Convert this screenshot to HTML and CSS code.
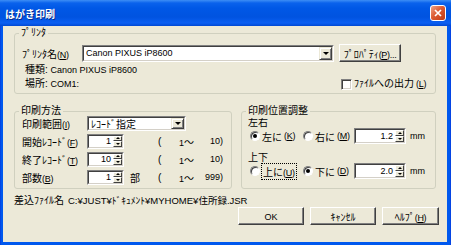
FILE: index.html
```html
<!DOCTYPE html>
<html lang="ja">
<head>
<meta charset="utf-8">
<title>はがき印刷</title>
<link rel="stylesheet" href="styles.css">
</head>
<body>
<div class="win">
  <div class="titlebar">
    <span class="title">はがき印刷</span>
    <span class="close"><svg width="8" height="8" viewBox="0 0 8 8"><path d="M1 1L7 7M7 1L1 7" stroke="#fff" stroke-width="1.7" fill="none"/></svg></span>
  </div>
  <div class="client">
    <div class="grp grp-printer">
      <span class="legend">ﾌﾟﾘﾝﾀ</span>
      <div class="row-name">
        <span class="lbl-name">ﾌﾟﾘﾝﾀ名<span class="k">(<u>N</u>)</span></span>
        <div class="field combo-printer">
          <div class="field-in"><span class="combo-text l">Canon PIXUS iP8600</span><span class="drop"><i></i></span></div>
        </div>
        <button class="btn btn-prop">ﾌﾟﾛﾊﾟﾃｨ<span class="k">(<u>P</u>)...</span></button>
      </div>
      <div class="info info-first">種類: <span class="l">Canon PIXUS iP8600</span></div>
      <div class="info">場所: <span class="l">COM1:</span><span class="chk"><span class="box"></span>ﾌｧｲﾙへの出力<span class="k">(<u>L</u>)</span></span></div>
    </div>

    <div class="groups">
      <div class="grp grp-method">
        <span class="legend">印刷方法</span>
        <div class="frow">
          <span class="flbl">印刷範囲<span class="k">(<u>I</u>)</span></span>
          <div class="field combo-range">
            <div class="field-in"><span class="combo-text">ﾚｺｰﾄﾞ指定</span><span class="drop"><i></i></span></div>
          </div>
        </div>
        <div class="frow">
          <span class="flbl">開始ﾚｺｰﾄﾞ<span class="k">(<u>F</u>)</span></span>
          <div class="field spin spin-rec"><div class="field-in"><span class="spin-val l">1</span><span class="sbtns"><span class="sb"><i class="up"></i></span><span class="sb"><i class="dn"></i></span></span></div></div>
          <span class="unit"></span><span class="paren">(</span><span class="lo"><span class="l">1</span>～</span><span class="hi l">10)</span>
        </div>
        <div class="frow">
          <span class="flbl">終了ﾚｺｰﾄﾞ<span class="k">(<u>T</u>)</span></span>
          <div class="field spin spin-rec"><div class="field-in"><span class="spin-val l">10</span><span class="sbtns"><span class="sb"><i class="up"></i></span><span class="sb"><i class="dn"></i></span></span></div></div>
          <span class="unit"></span><span class="paren">(</span><span class="lo"><span class="l">1</span>～</span><span class="hi l">10)</span>
        </div>
        <div class="frow">
          <span class="flbl">部数<span class="k">(<u>B</u>)</span></span>
          <div class="field spin spin-rec"><div class="field-in"><span class="spin-val l">1</span><span class="sbtns"><span class="sb"><i class="up"></i></span><span class="sb"><i class="dn"></i></span></span></div></div>
          <span class="unit">部</span><span class="paren">(</span><span class="lo"><span class="l">1</span>～</span><span class="hi l">999)</span>
        </div>
      </div>

      <div class="grp grp-pos">
        <span class="legend">印刷位置調整</span>
        <div class="hd">左右</div>
        <div class="rrow">
          <span class="opt opt1"><span class="radio on"></span>左に<span class="k">(<u>K</u>)</span></span>
          <span class="opt opt2"><span class="radio"></span>右に<span class="k">(<u>M</u>)</span></span>
          <div class="field spin spin-pos"><div class="field-in"><span class="spin-val l">1.2</span><span class="sbtns"><span class="sb"><i class="up"></i></span><span class="sb"><i class="dn"></i></span></span></div></div>
          <span class="mm l">mm</span>
        </div>
        <div class="hd hd2">上下</div>
        <div class="rrow">
          <span class="opt opt1"><span class="radio"></span><span class="focus">上に<span class="k">(<u>U</u>)</span></span></span>
          <span class="opt opt2"><span class="radio on"></span>下に<span class="k">(<u>D</u>)</span></span>
          <div class="field spin spin-pos"><div class="field-in"><span class="spin-val l">2.0</span><span class="sbtns"><span class="sb"><i class="up"></i></span><span class="sb"><i class="dn"></i></span></span></div></div>
          <span class="mm l">mm</span>
        </div>
      </div>
    </div>

    <div class="file"><span class="file-lbl">差込ﾌｧｲﾙ名</span><span class="path">C:¥JUST¥ﾄﾞｷｭﾒﾝﾄ¥MYHOME¥住所録.JSR</span></div>

    <div class="btns">
      <button class="btn btn-ok"><span class="l">OK</span></button>
      <button class="btn btn-cancel">ｷｬﾝｾﾙ</button>
      <button class="btn btn-help">ﾍﾙﾌﾟ<span class="k">(<u>H</u>)</span></button>
    </div>
  </div>
</div>
</body>
</html>
```

FILE: styles.css
```css
* { box-sizing: border-box; }
html, body { margin: 0; padding: 0; }
body {
  width: 451px;
  height: 245px;
  overflow: hidden;
  font-family: "Liberation Sans", "Noto Sans CJK JP", sans-serif;
  font-size: 10px;
  color: #000;
  background: #0055e5;
}
.l { font-size: 9px; }
.k { font-size: 9px; letter-spacing: -0.3px; }
u { text-decoration: underline; text-underline-offset: 1px; }

.win {
  width: 451px;
  height: 245px;
  display: flex;
  flex-direction: column;
  background: linear-gradient(to right, #0831d9 0, #0058ee 1px, #0058ee 450px, #0831d9 451px);
}
.titlebar {
  height: 26px;
  flex: none;
  display: flex;
  align-items: center;
  padding: 0 5px 0 5px;
  background: linear-gradient(to bottom, #3d8ef5 0, #0a62ec 3px, #0058e6 8px, #0053e0 17px, #0a5ff2 23px, #0048d2 26px);
}
.title {
  color: #fff;
  font-weight: bold;
  font-size: 10px;
  font-family: "Noto Sans CJK JP", sans-serif;
  text-shadow: 1px 1px 0 #0a2a8c;
}
.close {
  margin-left: auto;
  width: 16px;
  height: 16px;
  border: 1px solid #fff;
  border-radius: 3px;
  background: linear-gradient(135deg, #eea48a 0, #dd5b32 45%, #c03a14 100%);
  display: flex;
  align-items: center;
  justify-content: center;
}
.client {
  flex: 1;
  margin: 0 4px 3px 3px;
  background: #ece9d8;
  display: flex;
  flex-direction: column;
}

.grp {
  position: relative;
  border: 1px solid #d0d0bf;
  border-radius: 3px;
}
.legend {
  position: absolute;
  top: -8px;
  left: 4px;
  padding: 0 2px;
  background: #ece9d8;
  line-height: 14px;
  white-space: nowrap;
}

/* printer group */
.grp-printer {
  margin: 7px 0 0 11px;
  width: 422px;
  height: 61px;
  padding: 10px 0 0 7px;
}
.row-name {
  display: flex;
  align-items: center;
  height: 18px;
}
.lbl-name { width: 60px; flex: none; white-space: nowrap; }

.field {
  display: flex;
  border: 1px solid;
  border-color: #808080 #fff #fff #808080;
  flex: none;
}
.field-in {
  flex: 1;
  display: flex;
  align-items: stretch;
  background: #fff;
  border: 1px solid;
  border-color: #404040 #d4d0c8 #d4d0c8 #404040;
  min-width: 0;
}
.combo-text {
  flex: 1;
  padding-left: 2px;
  display: flex;
  align-items: center;
  white-space: nowrap;
  overflow: hidden;
}
.drop {
  width: 13px;
  flex: none;
  background: #ece9d8;
  border: 1px solid;
  border-color: #ece9d8 #404040 #404040 #ece9d8;
  box-shadow: inset 1px 1px 0 #fff, inset -1px -1px 0 #808080;
  display: flex;
  align-items: center;
  justify-content: center;
}
.drop i {
  width: 0;
  height: 0;
  border-left: 3px solid transparent;
  border-right: 3px solid transparent;
  border-top: 3px solid #000;
}
.combo-printer { width: 252px; height: 17px; }

.btn {
  font: inherit;
  color: #000;
  background: #ece9d8;
  border: 1px solid;
  border-color: #fff #404040 #404040 #fff;
  box-shadow: inset -1px -1px 0 #808080;
  padding: 0;
  height: 18px;
  white-space: nowrap;
  flex: none;
}
.btn-prop { width: 62px; margin-left: 5px; }

.info {
  height: 14px;
  line-height: 14px;
  padding-left: 3px;
  display: flex;
  align-items: center;
  white-space: pre;
}
.info-first { margin-top: 1px; }
.chk {
  margin-left: auto;
  width: 94px;
  display: flex;
  align-items: center;
  gap: 2px;
}
.box {
  width: 11px;
  height: 11px;
  flex: none;
  background: #fff;
  border: 1px solid;
  border-color: #808080 #fff #fff #808080;
  box-shadow: inset 1px 1px 0 #404040, inset -1px -1px 0 #d4d0c8;
}

/* lower groups */
.groups {
  display: flex;
  align-items: flex-start;
  margin-top: 17px;
}
.grp-method {
  margin-left: 11px;
  width: 218px;
  height: 78px;
  padding: 2px 0 0 7px;
}
.grp-pos {
  margin-left: 9px;
  width: 195px;
  height: 78px;
  padding: 4px 0 0 6px;
}
.frow {
  display: flex;
  align-items: center;
  height: 18px;
  white-space: nowrap;
}
.flbl { width: 65px; flex: none; }
.combo-range { width: 99px; height: 15px; }

.spin { height: 15px; }
.spin-rec { width: 37px; }
.spin-val {
  flex: 1;
  text-align: right;
  padding-right: 2px;
  display: flex;
  align-items: center;
  justify-content: flex-end;
}
.sbtns {
  width: 9px;
  flex: none;
  display: flex;
  flex-direction: column;
}
.sb {
  flex: 1;
  background: #ece9d8;
  border: 1px solid;
  border-color: #fff #404040 #404040 #fff;
  display: flex;
  align-items: center;
  justify-content: center;
}
.sb i { width: 0; height: 0; border-left: 2px solid transparent; border-right: 2px solid transparent; }
.sb i.up { border-bottom: 2px solid #000; }
.sb i.dn { border-top: 2px solid #000; }

.unit { width: 34px; padding-left: 6px; flex: none; }
.paren { width: 14px; flex: none; }
.lo { width: 22px; text-align: right; flex: none; }
.hi { width: 29px; text-align: right; flex: none; }

.hd {
  height: 12px;
  line-height: 14px;
}
.hd2 { margin-top: 7px; }
.rrow {
  display: flex;
  align-items: center;
  height: 16px;
  white-space: nowrap;
}
.opt { display: flex; align-items: center; gap: 2px; flex: none; }
.opt1 { width: 55px; padding-left: 2px; }
.opt2 { width: 51px; }
.radio {
  width: 10px;
  height: 10px;
  flex: none;
  border-radius: 50%;
  background: #fff;
  border: 1px solid;
  border-color: #808080 #fff #fff #808080;
  box-shadow: inset 1px 1px 0 #404040;
  display: flex;
  align-items: center;
  justify-content: center;
}
.radio.on::after {
  content: "";
  width: 4px;
  height: 4px;
  border-radius: 50%;
  background: #000;
}
.focus { outline: 1px dotted #000; padding: 0 1px; }
.spin-pos { width: 52px; height: 16px; }
.mm { margin-left: 4px; }

.file {
  margin-top: 5px;
  height: 13px;
  line-height: 13px;
  padding-left: 11px;
  display: flex;
  white-space: nowrap;
}
.file-lbl { width: 54px; flex: none; }
.path { font-size: 9.5px; }

.btns {
  display: flex;
  justify-content: flex-end;
  gap: 6px;
  padding-right: 8px;
  height: 18px;
}
.btn-ok, .btn-cancel { width: 66px; }
.btn-help { width: 57px; }
```
